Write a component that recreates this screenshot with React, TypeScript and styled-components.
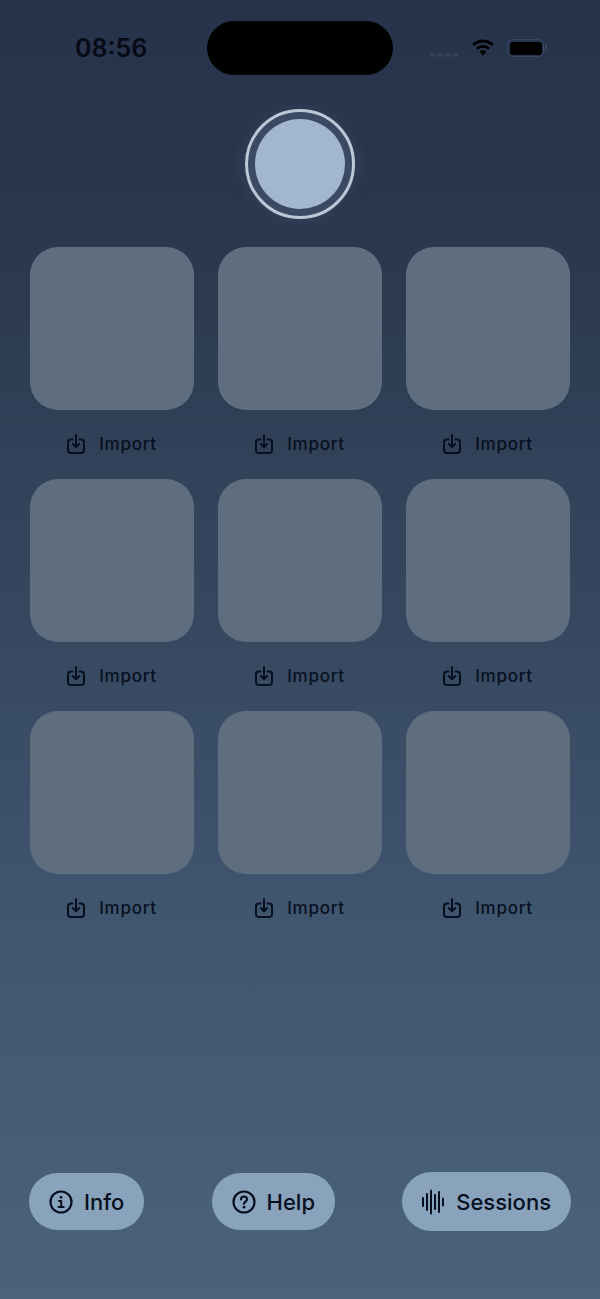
import { FC } from "react"
import styled, { createGlobalStyle } from "styled-components"

const ink = "#081020"

const GlobalStyle = createGlobalStyle`
  html,
  body {
    margin: 0;
    padding: 0;
    background: #26334a;
  }
`

const Screen = styled.div`
  width: 600px;
  height: 1299px;
  overflow: hidden;
  display: flex;
  flex-direction: column;
  background: linear-gradient(180deg, #26334a 0%, #2a384f 18%, #364961 50%, #445a74 80%, #4a627c 100%);
  font-family: Inter, "Noto Sans", sans-serif;
  color: ${ink};
`

const StatusBar = styled.div`
  display: grid;
  grid-template-columns: 1fr 186px 1fr;
  align-items: center;
  padding-top: 21px;
`

const Clock = styled.div`
  padding-left: 75px;
  font-size: 25px;
  font-weight: 600;
  letter-spacing: 0;
  line-height: 54px;
  color: #050a14;
`

const Island = styled.div`
  height: 54px;
  border-radius: 27px;
  background: #000;
`

const StatusIcons = styled.div`
  display: flex;
  align-items: center;
  padding-left: 37px;
`

const SignalDots = styled.div`
  display: flex;
  gap: 3px;
  margin-top: 13px;
  margin-right: 12px;
`

const SignalDot = styled.span`
  width: 5px;
  height: 4px;
  border-radius: 2px;
  background: #34445c;
`

const Battery = styled.div`
  position: relative;
  width: 37px;
  height: 18px;
  margin-left: 12px;
  box-sizing: border-box;
  border: 1.5px solid #3a4763;
  border-radius: 6px;
  padding: 1.5px;

  &::before {
    content: "";
    display: block;
    height: 100%;
    border-radius: 3px;
    background: #000;
  }

  &::after {
    content: "";
    position: absolute;
    right: -4px;
    top: 4px;
    width: 2px;
    height: 6px;
    border-radius: 0 2px 2px 0;
    background: #3a4763;
  }
`

const RecordRow = styled.div`
  display: flex;
  justify-content: center;
  margin-top: 34px;
`

const RecordRing = styled.button`
  width: 110px;
  height: 110px;
  box-sizing: border-box;
  padding: 0;
  display: flex;
  align-items: center;
  justify-content: center;
  border: 3px solid #bcc8d6;
  border-radius: 50%;
  background: #3a4a62;
  box-shadow: 0 0 18px rgba(163, 184, 210, 0.1);
`

const RecordCore = styled.span`
  width: 90px;
  height: 90px;
  border-radius: 50%;
  background: #a2b6cf;
`

const PadGrid = styled.div`
  display: grid;
  grid-template-columns: repeat(3, 164px);
  column-gap: 24px;
  padding: 28px 30px 0;
`

const PadCell = styled.div`
  display: flex;
  flex-direction: column;
  align-items: center;
`

const Pad = styled.div`
  width: 164px;
  height: 163px;
  border-radius: 28px;
  background: #5f6e7f;
`

const ImportButton = styled.div`
  display: flex;
  align-items: center;
  gap: 14px;
  height: 69px;
  padding-bottom: 1px;
  box-sizing: border-box;
  font-size: 17px;
  font-weight: 500;
  letter-spacing: 0.75px;
`

const BottomBar = styled.div`
  margin-top: auto;
  display: flex;
  align-items: center;
  justify-content: space-between;
  padding: 0 29px 68px;
`

const PillButton = styled.div<{ $wide?: boolean }>`
  display: flex;
  align-items: center;
  gap: ${(p) => (p.$wide ? "12px" : "11px")};
  height: ${(p) => (p.$wide ? "59px" : "57px")};
  padding: 0 20px;
  border-radius: 30px;
  background: #89a3bc;
  font-size: 22px;
  font-weight: 500;
`

const WifiIcon: FC = () => (
  <svg width="24" height="18" viewBox="0 0 24 18" fill="#000">
    <path d="M12 3.4c3.4 0 6.5 1.3 8.8 3.5l1.9-2C19.9 2.2 16.1.5 12 .5S4.100 2.200 1.300 4.900l1.900 2C5.500 4.700 8.600 3.400 12 3.400z" />
    <path d="M12 8.700c2 0 3.800.8 5.100 2l1.900-2c-1.800-1.700-4.300-2.800-7-2.800s-5.200 1.100-7 2.800l1.900 2c1.300-1.200 3.100-2 5.100-2z" />
    <path d="M12 11.300c-1.300 0-2.500.5-3.400 1.400L12 16.700l3.400-4c-.9-.9-2.100-1.400-3.400-1.400z" />
  </svg>
)

const ImportIcon: FC = () => (
  <svg width="18" height="20" viewBox="0 0 18 20" fill="none" stroke={ink} strokeWidth="2" strokeLinecap="round" strokeLinejoin="round">
    <path d="M5.500 5.500H4a3 3 0 0 0-3 3v7.500a3 3 0 0 0 3 3h10a3 3 0 0 0 3-3V8.500a3 3 0 0 0-3-3h-1.500" />
    <path d="M9 1v12" />
    <path d="M5.800 10 9 13.200 12.200 10" />
  </svg>
)

const InfoIcon: FC = () => (
  <svg width="24" height="24" viewBox="0 0 24 24" fill="none" stroke={ink} strokeWidth="2.200" strokeLinecap="round" strokeLinejoin="round">
    <circle cx="12" cy="12" r="10.500" />
    <path d="M10 11h2.200v6" strokeWidth="2" />
    <path d="M9.500 17h5.200" strokeWidth="2" />
    <circle cx="12" cy="7.300" r="1.400" fill={ink} stroke="none" />
  </svg>
)

const HelpIcon: FC = () => (
  <svg width="24" height="24" viewBox="0 0 24 24" fill="none" stroke={ink} strokeWidth="2.200" strokeLinecap="round" strokeLinejoin="round">
    <circle cx="12" cy="12" r="10.500" />
    <path d="M9 9.500a3 3 0 0 1 6 0c0 2-3 2.300-3 4.300" />
    <circle cx="12" cy="17.200" r="1.400" fill={ink} stroke="none" />
  </svg>
)

const waveBars = [
  [1, 10],
  [5, 18],
  [9, 25],
  [13, 16],
  [17, 22],
  [21, 9],
]

const WaveIcon: FC = () => (
  <svg width="22" height="26" viewBox="0 0 22 26" fill="none" stroke={ink} strokeWidth="2" strokeLinecap="round">
    {waveBars.map(([x, h]) => (
      <line key={x} x1={x} x2={x} y1={13 - h / 2 + 1} y2={13 + h / 2 - 1} />
    ))}
  </svg>
)

const pads = Array.from({ length: 9 }, (_, i) => i)

const App: FC = () => {
  return (
    <Screen>
      <GlobalStyle />
      <StatusBar>
        <Clock>08:56</Clock>
        <Island />
        <StatusIcons>
          <SignalDots>
            {[0, 1, 2, 3].map((d) => (
              <SignalDot key={d} />
            ))}
          </SignalDots>
          <WifiIcon />
          <Battery />
        </StatusIcons>
      </StatusBar>

      <RecordRow>
        <RecordRing>
          <RecordCore />
        </RecordRing>
      </RecordRow>

      <PadGrid>
        {pads.map((p) => (
          <PadCell key={p}>
            <Pad />
            <ImportButton>
              <ImportIcon />
              Import
            </ImportButton>
          </PadCell>
        ))}
      </PadGrid>

      <BottomBar>
        <PillButton>
          <InfoIcon />
          Info
        </PillButton>
        <PillButton>
          <HelpIcon />
          Help
        </PillButton>
        <PillButton $wide>
          <WaveIcon />
          Sessions
        </PillButton>
      </BottomBar>
    </Screen>
  )
}

export default App
